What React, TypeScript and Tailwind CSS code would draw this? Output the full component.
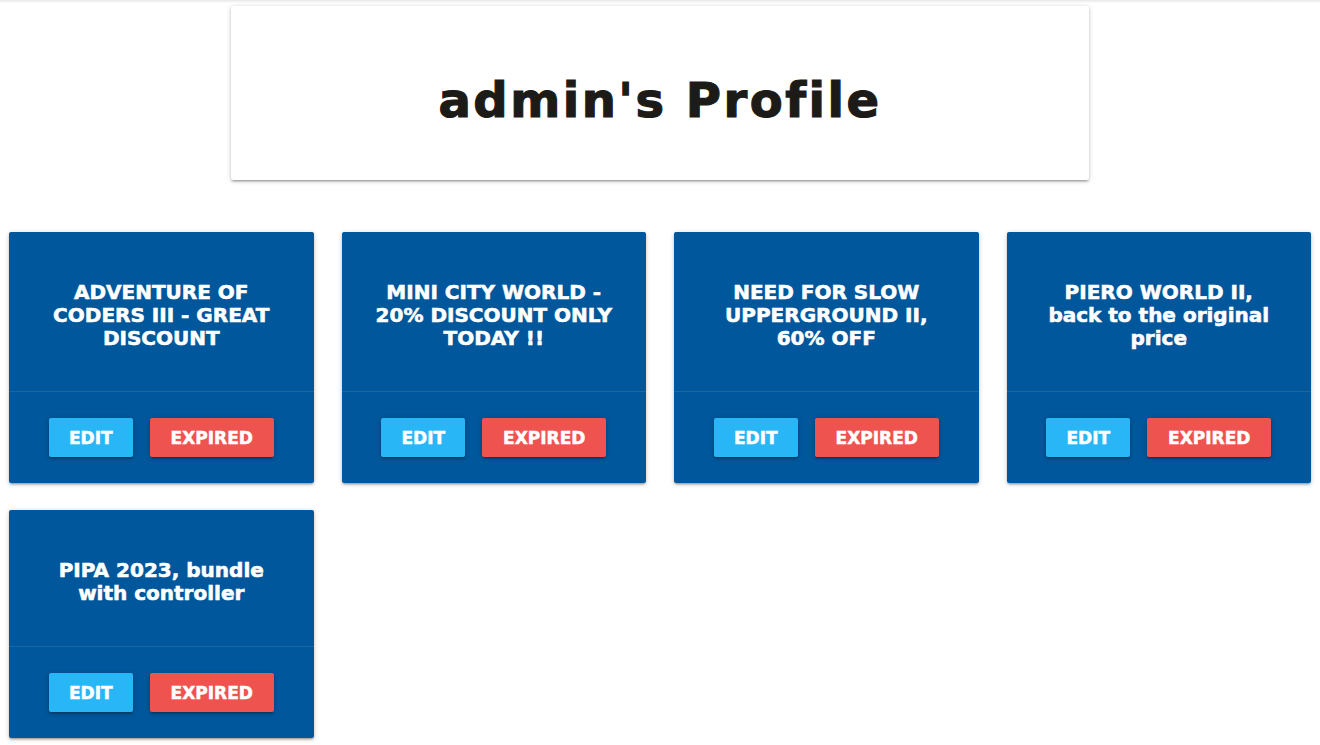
import React from "react";

const shadow =
  "shadow-[0_2px_2px_0_rgba(0,0,0,0.14),0_3px_1px_-2px_rgba(0,0,0,0.12),0_1px_5px_0_rgba(0,0,0,0.2)]";

const deals: string[][] = [
  ["ADVENTURE OF", "CODERS III - GREAT", "DISCOUNT"],
  ["MINI CITY WORLD -", "20% DISCOUNT ONLY", "TODAY !!"],
  ["NEED FOR SLOW", "UPPERGROUND II,", "60% OFF"],
  ["PIERO WORLD II,", "back to the original", "price"],
  ["PIPA 2023, bundle", "with controller"],
];

function DealCard({ lines }: { lines: string[] }) {
  return (
    <div className={`bg-[#01579b] rounded-[2px] ${shadow} text-white`}>
      <div className="pt-[49px] pb-[41px] px-6 text-center text-[20px] leading-[23px] font-bold [-webkit-text-stroke:0.6px_white]">
        {lines.map((l, i) => (
          <div key={i} className="whitespace-nowrap">
            {l}
          </div>
        ))}
      </div>
      <div className="border-t border-[rgba(160,160,160,0.2)] pt-[26px] pb-[26px] flex justify-center gap-[17px]">
        <button
          className={`w-[84px] h-[39px] pt-[2px] rounded-[2px] bg-[#29b6f6] text-white text-[17px] font-bold [-webkit-text-stroke:0.5px_white] flex items-center justify-center ${shadow}`}
        >
          EDIT
        </button>
        <button
          className={`w-[124px] h-[39px] pt-[2px] rounded-[2px] bg-[#ef5350] text-white text-[17px] font-bold [-webkit-text-stroke:0.5px_white] flex items-center justify-center ${shadow}`}
        >
          EXPIRED
        </button>
      </div>
    </div>
  );
}

export default function App() {
  return (
    <div
      className="min-h-[745px] bg-white"
      style={{ fontFamily: '"DejaVu Sans", "Liberation Sans", sans-serif' }}
    >
      <div className="h-[3px] bg-gradient-to-b from-[#e6e6e6] to-white" />
      <div className="pt-[3px]">
        <div
          className={`w-[858px] h-[174px] mx-auto bg-white rounded-[2px] ${shadow} flex items-center justify-center`}
        >
          <h1 className="text-[48px] font-bold text-[#1c1b18] tracking-[2.5px] leading-none pt-[14px] [-webkit-text-stroke:1.2px_#1c1b18]">
            admin's Profile
          </h1>
        </div>
      </div>
      <div className="mt-[52px] px-[9px] grid grid-cols-4 gap-x-[28px] gap-y-[27px] items-start">
        {deals.map((d, i) => (
          <DealCard key={i} lines={d} />
        ))}
      </div>
    </div>
  );
}
